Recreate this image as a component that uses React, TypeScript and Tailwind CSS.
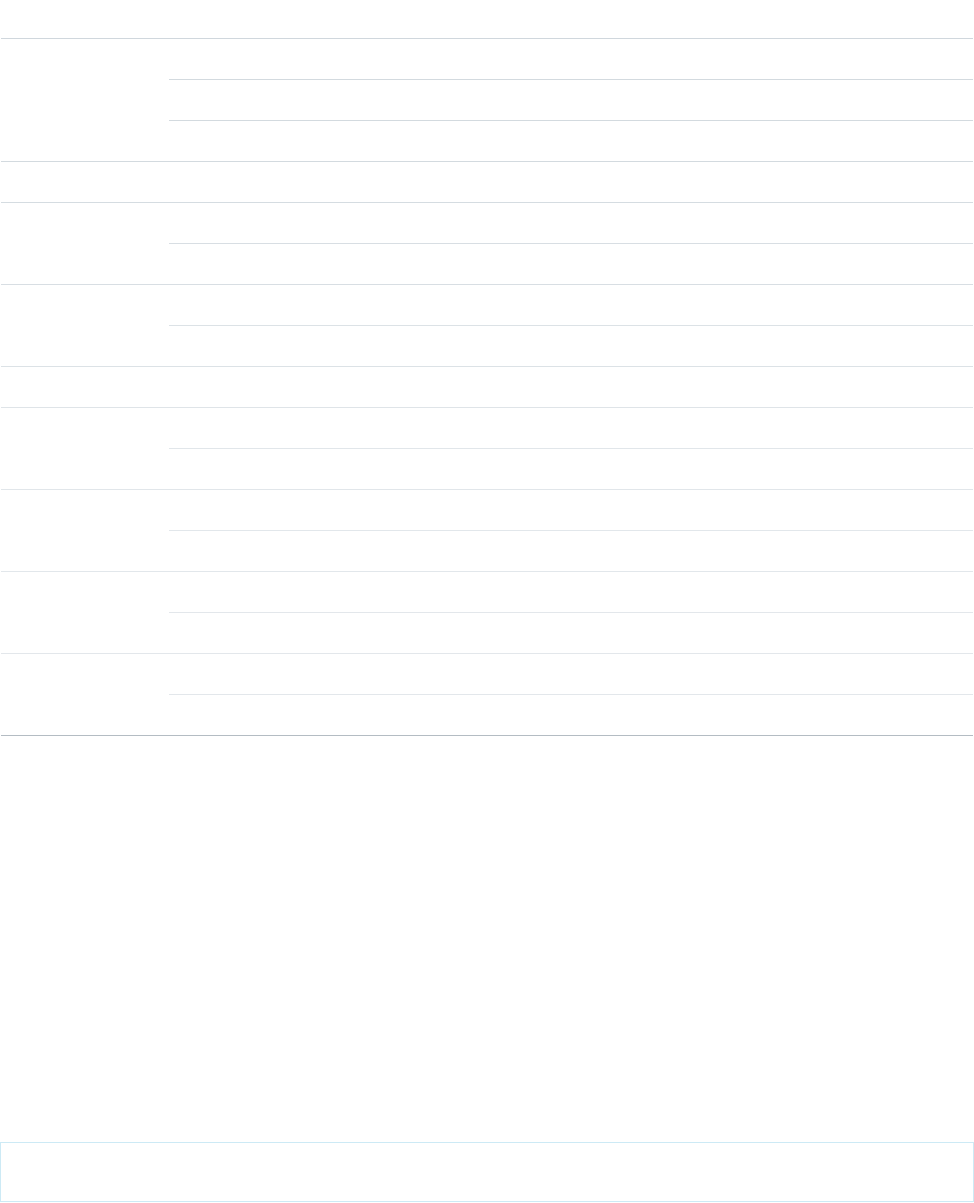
import React from 'react'

// row groups: number of sub-rows and the line colour for that band
const groups: { rows: number; line: string }[] = [
  { rows: 3, line: 'border-[#d3dadf]' },
  { rows: 1, line: 'border-[#d5dce1]' },
  { rows: 2, line: 'border-[#d8dee3]' },
  { rows: 2, line: 'border-[#dce2e6]' },
  { rows: 1, line: 'border-[#dfe4e8]' },
  { rows: 2, line: 'border-[#e1e6ea]' },
  { rows: 2, line: 'border-[#e2e7eb]' },
  { rows: 2, line: 'border-[#e3e7eb]' },
  { rows: 2, line: 'border-[#e3e7eb]' },
]

const RowGroup = ({ rows, line, last }: { rows: number; line: string; last: boolean }) => (
  <div className={`flex border-b ${last ? 'border-[#b4bcc3]' : line}`}>
    <div className="w-[168px] shrink-0" />
    <div className="flex-1 flex flex-col">
      {Array.from({ length: rows }).map((_, i) => (
        <div key={i} className={`box-content h-[40px] ${i < rows - 1 ? `border-b ${line}` : ''}`} />
      ))}
    </div>
  </div>
)

export default function App() {
  return (
    <div className="min-h-[1203px] bg-white flex flex-col font-['Liberation_Sans',sans-serif]">
      <div className="ml-[1px] w-[972px]">
        {/* header */}
        <div className="h-[39px] border-b border-[#d0d7dd]" />
        {groups.map((g, i) => (
          <RowGroup key={i} rows={g.rows} line={g.line} last={i === groups.length - 1} />
        ))}
      </div>
      <div className="mt-[406px] h-[60px] w-[974px] border border-[#cdeaf5]" />
    </div>
  )
}
